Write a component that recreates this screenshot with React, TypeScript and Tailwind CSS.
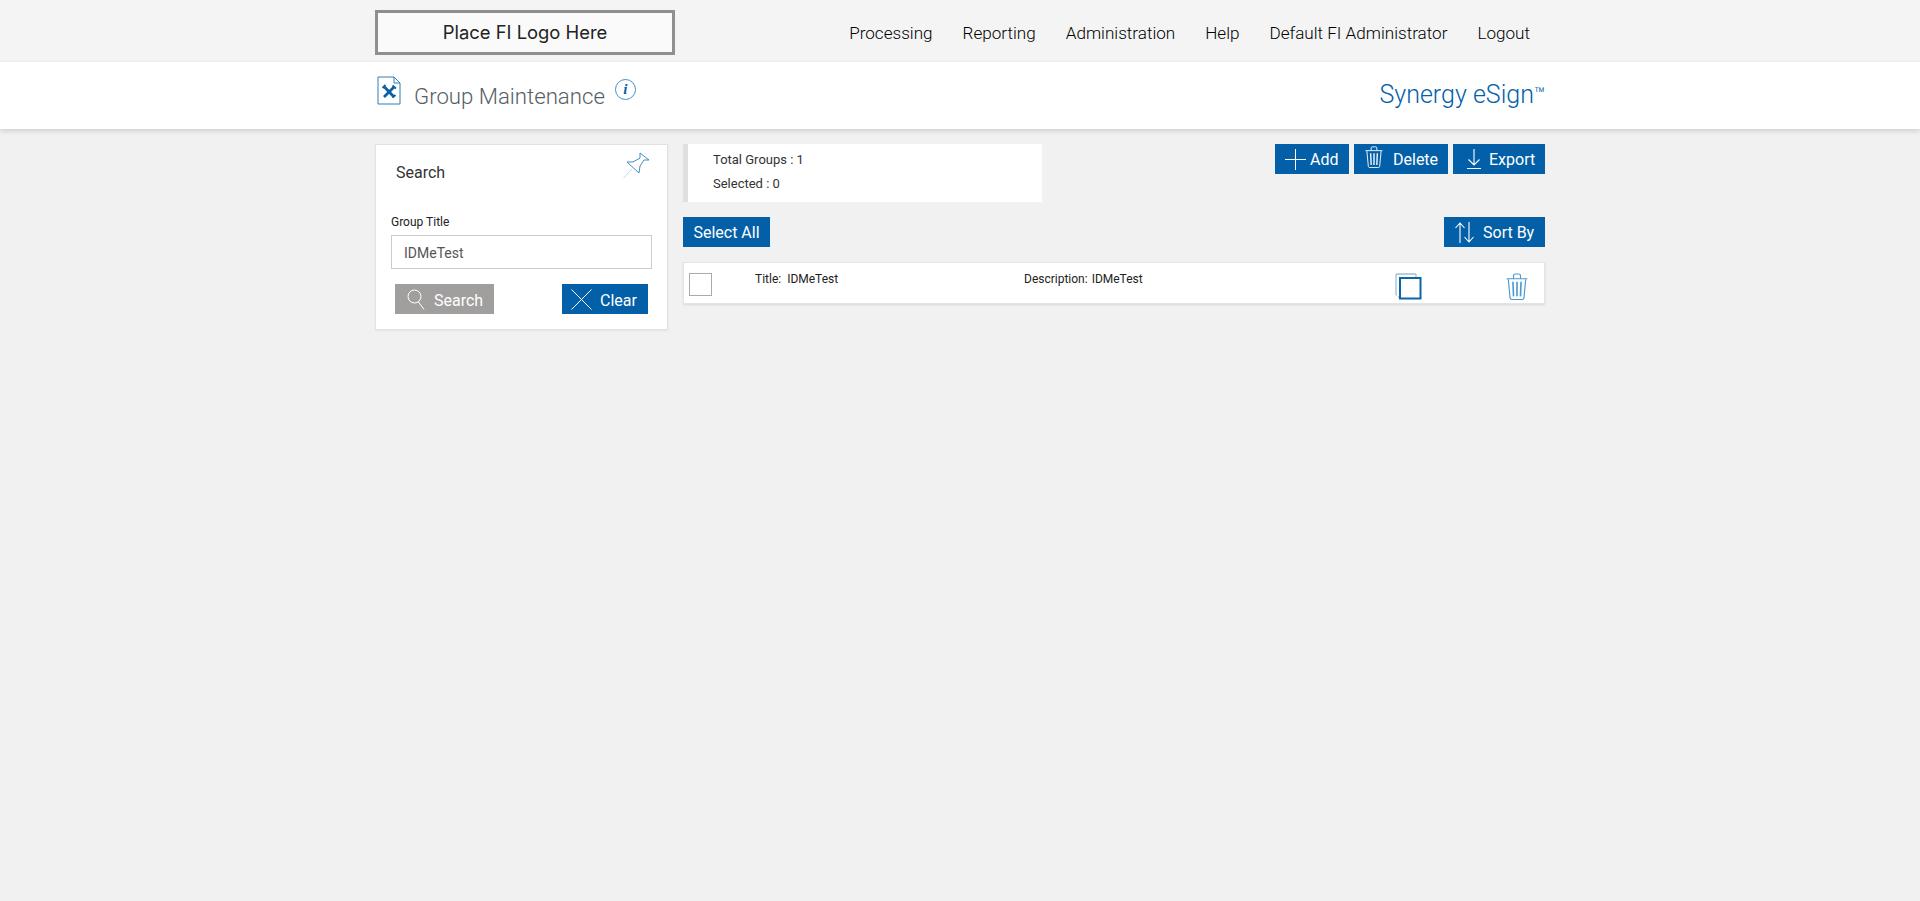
const font = "font-['Roboto',sans-serif]";

function PlusIcon() {
  return (
    <svg width="21" height="21" viewBox="0 0 21 21" fill="none" stroke="currentColor" strokeWidth="1">
      <path d="M10.5 0v21M0 10.5h21" />
    </svg>
  );
}

function TrashIcon({ className }: { className?: string }) {
  return (
    <svg viewBox="0 0 19 26" preserveAspectRatio="none" fill="none" stroke="currentColor" strokeWidth="1" className={className}>
      <path d="M0.500 5.500h18M6.500 5V2.500q0-1.500 1.500-1.500h3q1.500 0 1.500 1.500V5" />
      <path d="M2 6l1.500 18q0.200 1.500 1.500 1.500h9q1.300 0 1.500-1.500L17 6" />
      <path d="M6 8.500l0.500 14M9.500 8.500v14M13 8.500l-0.500 14" strokeWidth="1.400" />
    </svg>
  );
}

function ExportIcon() {
  return (
    <svg width="16" height="20" viewBox="0 0 16 20" fill="none" stroke="currentColor" strokeWidth="1.100">
      <path d="M8 0v16M2.500 10.500L8 16l5.500-5.500M1 19.500h14" />
    </svg>
  );
}

function SortIcon() {
  return (
    <svg width="19" height="21" viewBox="0 0 19 21" fill="none" stroke="currentColor" strokeWidth="1.100">
      <path d="M5 21V1M0.500 6L5 1l4.500 5M14 0v20M9.500 15l4.500 5 4.500-5" />
    </svg>
  );
}

function SearchIcon() {
  return (
    <svg width="18" height="21" viewBox="0 0 18 21" fill="none" stroke="currentColor" strokeWidth="1">
      <circle cx="7.500" cy="7.500" r="6.500" />
      <path d="M11.500 13l5.500 7.500" />
    </svg>
  );
}

function ClearIcon() {
  return (
    <svg width="21" height="21" viewBox="0 0 21 21" fill="none" stroke="currentColor" strokeWidth="1">
      <path d="M0.500 0.500l20 20M20.500 0.500l-20 20" />
    </svg>
  );
}

function PinIcon() {
  return (
    <svg width="27" height="27" viewBox="0 0 27 27" fill="none" stroke="#3f8fc6" strokeWidth="1">
      <path d="M4 10h6l7-4V1l9 7h-5l-4 6-1 7z" />
      <path d="M9 17L0.500 26" stroke="#c5d9e8" />
    </svg>
  );
}

function DocToolIcon() {
  return (
    <svg width="24" height="29" viewBox="0 0 24 29" fill="none" className="shrink-0">
      <path d="M1 1h16l6 6v21H1z M17 1v6h6" stroke="#2f7fb8" strokeWidth="1" fill="#fff" />
      <path d="M7.500 11l9.500 10M17 11L7 21" stroke="#0a5fa5" strokeWidth="2.800" />
      <path d="M5.500 12l3-3M15.500 9.500l3.500 3M15.500 21.500l3-2.500" stroke="#0a5fa5" strokeWidth="1.800" />
    </svg>
  );
}

function CopyIcon() {
  return (
    <svg width="27" height="27" viewBox="0 0 27 27" fill="none">
      <path d="M21 1H2q-1 0-1 1v19q0 1 1 1" stroke="#9dc0d6" strokeWidth="1.300" />
      <path d="M21 1v3M4 24h-1" stroke="#9dc0d6" strokeWidth="1.300" />
      <rect x="5" y="5" width="20.500" height="20.500" stroke="#0b66a8" strokeWidth="2" fill="#fff" />
    </svg>
  );
}

function ActionButton({ label, icon, className, textClass }: { label: string; icon: React.ReactNode; className?: string; textClass?: string }) {
  return (
    <button className={`flex h-[30px] items-center bg-[#035fa8] text-[16px] text-white ${className ?? ""}`}>
      {icon}
      <span className={textClass ?? "pt-[2px]"}>{label}</span>
    </button>
  );
}

const navItems = ["Processing", "Reporting", "Administration", "Help", "Default FI Administrator", "Logout"];

export default function App() {
  return (
    <div className={`${font} min-h-[901px] bg-[#f1f1f1]`}>
      <header className="h-[62px] bg-[#f4f4f4]">
        <div className="mx-auto flex w-[1170px] items-start justify-between">
          <div className="mt-[10px] flex h-[45px] w-[300px] items-center justify-center border-[3px] border-[#8f8f8f] bg-[#fafafa] font-['Inter',sans-serif] text-[18.4px] text-[#222]">
            Place FI Logo Here
          </div>
          <nav className="mt-[23px] mr-[15px] flex gap-[30px] text-[17.1px] leading-[20px] font-light text-black">
            {navItems.map((item) => (
              <a key={item}>{item}</a>
            ))}
          </nav>
        </div>
      </header>

      <div className="relative h-[67px] bg-white shadow-[0_2px_5px_rgba(0,0,0,0.15)]">
        <div className="mx-auto flex h-full w-[1170px] justify-between">
          <div className="flex items-start">
            <div className="mt-[14px] ml-[2px]">
              <DocToolIcon />
            </div>
            <h1 className="mt-[20px] ml-[13px] text-[22.2px] leading-[28px] font-light text-[#555f66]">
              Group Maintenance
            </h1>
            <span className="mt-[17px] ml-[10px] flex h-[21px] w-[21px] items-center justify-center rounded-full border border-[#3f8fc6] font-['Liberation_Serif',serif] text-[15px] font-bold text-[#0a5fa5] italic">
              i
            </span>
          </div>
          <div className="mt-[17px] text-[25px] leading-[32px] font-light text-[#035fa8]">
            Synergy eSign<sup className="-top-[3px] text-[18px] leading-none">™</sup>
          </div>
        </div>
      </div>

      <main className="mx-auto mt-[15px] flex w-[1170px] items-start gap-[15px]">
        <aside className="h-[186px] w-[293px] shrink-0 border border-[#e2e2e2] bg-white px-[15px] shadow-[0_1px_2px_rgba(0,0,0,0.06)]">
          <div className="flex items-start justify-between">
            <h2 className="mt-[18px] ml-[5px] text-[16px] leading-[20px] text-[#333]">Search</h2>
            <div className="mt-[7px] mr-[2px]">
              <PinIcon />
            </div>
          </div>
          <label className="mt-[31px] block text-[12px] leading-[16px] text-[#222]">Group Title</label>
          <input
            readOnly
            value="IDMeTest"
            className="mt-[5px] block h-[34px] w-[261px] border border-[#ccc] px-[12px] pt-[2px] text-[14px] text-[#555] outline-none"
          />
          <div className="mt-[15px] flex justify-between pr-[4px] pl-[4px]">
            <ActionButton
              label="Search"
              icon={<SearchIcon />}
              textClass="pt-[4px]"
              className="w-[99px] gap-[9px] !bg-[#a19e9e] pl-[12px] text-[#f3f3f3]"
            />
            <ActionButton label="Clear" icon={<ClearIcon />} textClass="pt-[4px]" className="w-[86px] gap-[8px] pl-[9px]" />
          </div>
        </aside>

        <section className="min-w-0 flex-1">
          <div className="flex items-start justify-between">
            <div className="h-[58px] w-[359px] border-l-[5px] border-[#e0e0e0] bg-white pt-[4px] pl-[25px] text-[13px] leading-[24px] text-[#333]">
              <p>Total Groups : 1</p>
              <p>Selected : 0</p>
            </div>
            <div className="flex gap-[5px]">
              <ActionButton label="Add" icon={<PlusIcon />} className="w-[74px] gap-[4px] pl-[10px]" />
              <ActionButton
                label="Delete"
                icon={<TrashIcon className="-mt-[4px] h-[22px] w-[18px]" />}
                className="w-[94px] gap-[10px] pl-[11px]"
              />
              <ActionButton label="Export" icon={<ExportIcon />} className="w-[92px] gap-[7px] pl-[13px]" />
            </div>
          </div>

          <div className="mt-[15px] flex justify-between">
            <button className="h-[30px] w-[87px] bg-[#035fa8] pt-[2px] text-[16px] text-white">Select All</button>
            <ActionButton label="Sort By" icon={<SortIcon />} className="w-[101px] gap-[9px] pl-[11px]" />
          </div>

          <div className="mt-[15px] flex h-[42px] w-[862px] items-start border border-[#e4e4e4] bg-white text-[12px] leading-[16px] text-[#222] shadow-[0_1px_2px_rgba(0,0,0,0.1)]">
            <span className="mt-[10px] ml-[5px] h-[23px] w-[23px] shrink-0 border border-[#aaa]" />
            <p className="mt-[8px] ml-[43px] w-[269px] whitespace-pre">Title:  IDMeTest</p>
            <p className="mt-[8px] w-[371px]">
              Description: <span className="ml-[1px]">IDMeTest</span>
            </p>
            <div className="mt-[10px]">
              <CopyIcon />
            </div>
            <div className="mt-[10px] ml-[84px] text-[#4a9bd0]">
              <TrashIcon className="h-[27px] w-[22px]" />
            </div>
          </div>
        </section>
      </main>
    </div>
  );
}
